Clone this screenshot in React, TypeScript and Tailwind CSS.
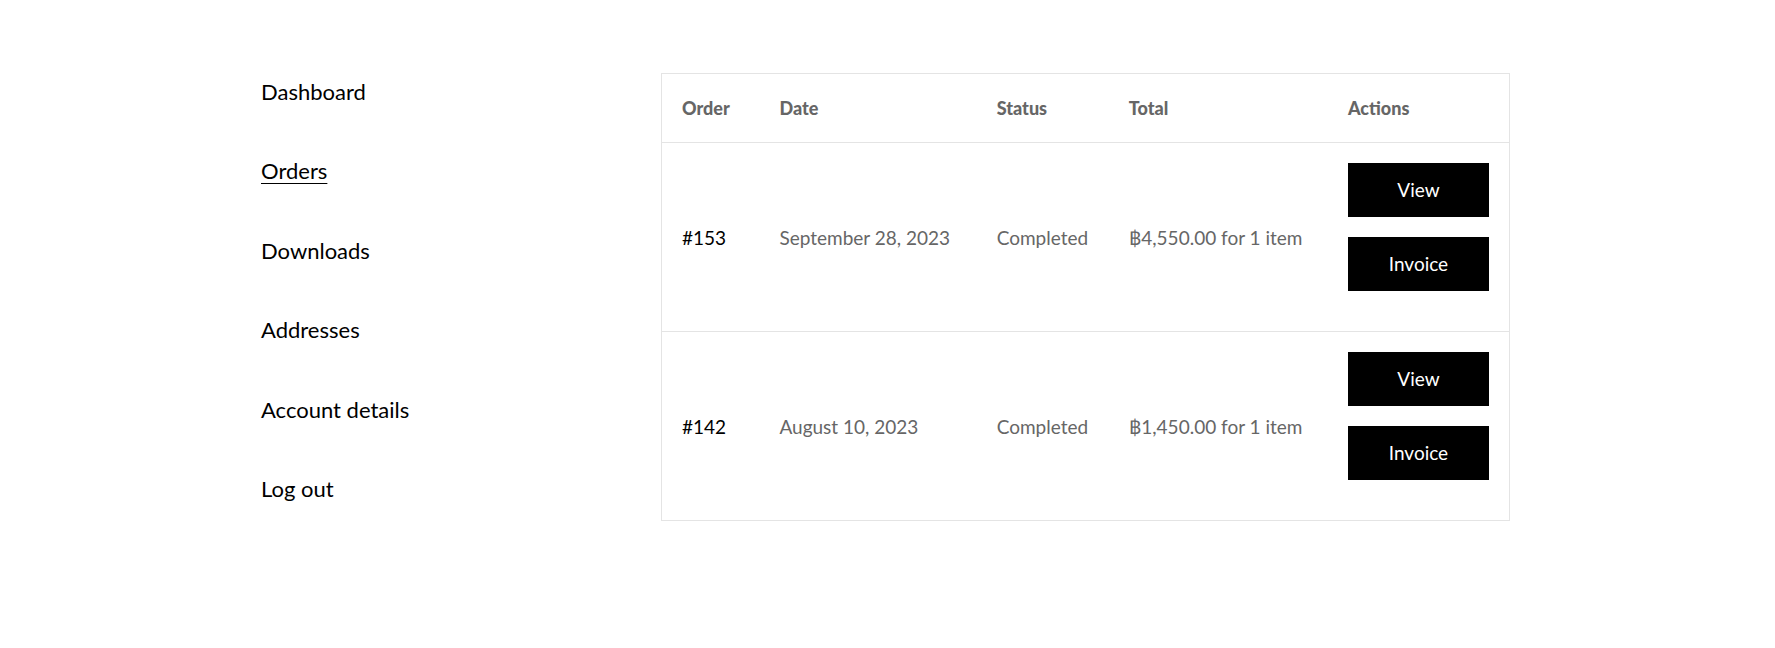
import React from "react";

const navItems = [
  { label: "Dashboard", active: false },
  { label: "Orders", active: true },
  { label: "Downloads", active: false },
  { label: "Addresses", active: false },
  { label: "Account details", active: false },
  { label: "Log out", active: false },
];

const orders = [
  { id: "#153", date: "September 28, 2023", status: "Completed", total: "฿4,550.00 for 1 item" },
  { id: "#142", date: "August 10, 2023", status: "Completed", total: "฿1,450.00 for 1 item" },
];

const App = () => {
  return (
    <div className="min-h-[648px] w-full bg-white font-['Lato',sans-serif]">
      <div className="mx-auto flex w-[1253px] pt-[73px]">
        {/* --- Account navigation --- */}
        <nav className="flex w-[400px] shrink-0 flex-col gap-[49.4px] pt-[4px]">
          {navItems.map((item) => (
            <a
              key={item.label}
              href="#"
              className={
                item.active
                  ? "text-[22px] leading-[30px] text-black underline decoration-1 underline-offset-[4px]"
                  : "text-[22px] leading-[30px] text-black"
              }
            >
              {item.label}
            </a>
          ))}
        </nav>

        {/* --- Orders table --- */}
        <table className="w-[849px] border-collapse border border-[#e4e4e4] text-left">
          <thead>
            <tr className="border-b border-[#e4e4e4]">
              <th className="h-[69px] w-[98px] px-[20px] text-[18px] font-black text-[#666666]">Order</th>
              <th className="h-[69px] w-[218px] px-[20px] text-[18px] font-black text-[#666666]">Date</th>
              <th className="h-[69px] w-[132px] px-[20px] text-[18px] font-black text-[#666666]">Status</th>
              <th className="h-[69px] w-[220px] px-[20px] text-[18px] font-black text-[#666666]">Total</th>
              <th className="h-[69px] w-[181px] px-[20px] text-[18px] font-black text-[#666666]">Actions</th>
            </tr>
          </thead>
          <tbody>
            {orders.map((order) => (
              <tr key={order.id} className="border-b border-[#e4e4e4]">
                <td className="px-[20px] pt-[2px] align-middle text-[19px] text-black">{order.id}</td>
                <td className="px-[20px] pt-[2px] align-middle text-[19px] text-[#666666]">{order.date}</td>
                <td className="px-[20px] pt-[2px] align-middle text-[19px] text-[#666666]">{order.status}</td>
                <td className="px-[20px] pt-[2px] align-middle text-[19px] text-[#666666]">{order.total}</td>
                <td className="px-[20px] pt-[20px] pb-[40px] align-top">
                  <div className="flex flex-col gap-[20px]">
                    <a href="#" className="flex h-[54px] w-[141px] items-center justify-center bg-black text-[19px] text-white">
                      View
                    </a>
                    <a href="#" className="flex h-[54px] w-[141px] items-center justify-center bg-black text-[19px] text-white">
                      Invoice
                    </a>
                  </div>
                </td>
              </tr>
            ))}
          </tbody>
        </table>
      </div>
    </div>
  );
};

export default App;
